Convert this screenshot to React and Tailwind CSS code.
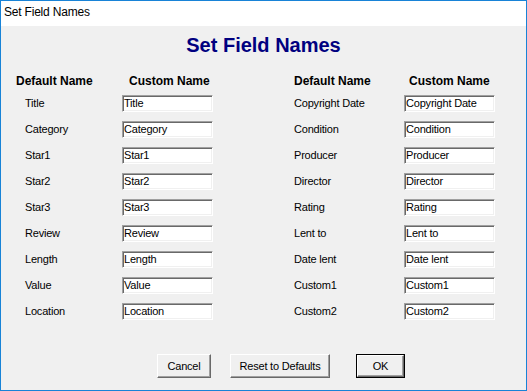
const leftFields = ["Title", "Category", "Star1", "Star2", "Star3", "Review", "Length", "Value", "Location"];
const rightFields = ["Copyright Date", "Condition", "Producer", "Director", "Rating", "Lent to", "Date lent", "Custom1", "Custom2"];

const FieldBox = ({ value }) => (
    <div className="h-[17px] w-[91px] bg-white border border-t-[#a0a0a0] border-l-[#a0a0a0] border-r-white border-b-white shadow-[inset_1px_1px_0_#696969,inset_-1px_-1px_0_#f0f0f0] pl-[1px] text-[11px] leading-[15px] tracking-[-0.2px] text-black whitespace-nowrap overflow-hidden">
        {value}
    </div>
);

const FieldColumn = ({ fields, labelCol, labelPad, customPad }) => (
    <div className="flex flex-col">
        {/* Column headers */}
        <div className={`grid ${labelCol} text-[12px] leading-[14px] font-bold text-black`}>
            <span>Default Name</span>
            <span className={customPad}>Custom Name</span>
        </div>

        {/* Field rows */}
        <div className="mt-[7px] flex flex-col gap-[9px]">
            {fields.map((name) => (
                <div key={name} className={`grid ${labelCol} h-[17px]`}>
                    <span className={`${labelPad} text-[11px] leading-[16px] tracking-[-0.2px] text-black whitespace-nowrap`}>
                        {name}
                    </span>
                    <FieldBox value={name} />
                </div>
            ))}
        </div>
    </div>
);

const Button = ({ label, width, isDefault }) => (
    <div className={`${width} h-[24px] ${isDefault ? "border border-black" : ""} flex`}>
        <button className="flex-1 bg-[#f0f0f0] border border-t-white border-l-white border-r-[#696969] border-b-[#696969] shadow-[inset_-1px_-1px_0_#a0a0a0] text-[11px] tracking-[-0.2px] text-black flex items-center justify-center">
            {label}
        </button>
    </div>
);

const App = () => {
    return (
        <div className="w-[527px] h-[391px] border border-[#1883d7] flex flex-col font-['Liberation_Sans',Arial,sans-serif] overflow-hidden">
            {/* Title bar */}
            <div className="h-[25px] bg-white pl-[3px] text-[12px] leading-[23px] tracking-[-0.2px] text-black">
                Set Field Names
            </div>

            {/* Dialog body */}
            <div className="flex-1 bg-[#f0f0f0] flex flex-col">
                <h1 className="pt-[8px] text-center text-[20px] leading-[23px] font-bold text-[#000080]">
                    Set Field Names
                </h1>

                <div className="mt-[17px] pl-[15px] flex">
                    <FieldColumn
                        fields={leftFields}
                        labelCol="grid-cols-[106px_91px]"
                        labelPad="pl-[9px]"
                        customPad="pl-[7px]"
                    />
                    <div className="ml-[81px]">
                        <FieldColumn
                            fields={rightFields}
                            labelCol="grid-cols-[110px_91px]"
                            labelPad="pl-0"
                            customPad="pl-[5px]"
                        />
                    </div>
                </div>

                {/* Buttons */}
                <div className="mt-[34px] pl-[156px] flex">
                    <Button label="Cancel" width="w-[54px]" />
                    <div className="ml-[19px]">
                        <Button label="Reset to Defaults" width="w-[100px]" />
                    </div>
                    <div className="ml-[26px]">
                        <Button label="OK" width="w-[49px]" isDefault />
                    </div>
                </div>
            </div>
        </div>
    );
};

export default App;
